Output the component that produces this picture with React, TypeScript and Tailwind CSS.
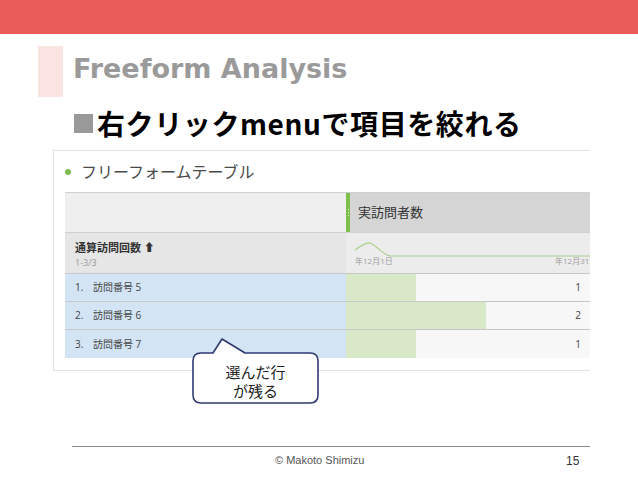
import React from "react";

const rows = [
  { n: "1.", label: "訪問番号 5", v: 1 },
  { n: "2.", label: "訪問番号 6", v: 2 },
  { n: "3.", label: "訪問番号 7", v: 1 },
];

const jp = { fontFamily: '"Open Sans", "Noto Sans CJK JP", sans-serif' };

export default function App() {
  return (
    <div className="w-[638px] h-[479px] bg-white relative overflow-hidden">
      <div className="h-[34px] bg-[#e85d58]" />
      <div className="flex items-center mt-[12px] ml-[38px]">
        <div className="w-[25px] h-[51px] bg-[#fbe3e1]" />
        <div
          className="ml-[10px] mb-[6px] text-[27px] font-bold text-[#9a9a9a] leading-none"
          style={{ fontFamily: '"DejaVu Sans", Verdana, sans-serif' }}
        >
          Freeform Analysis
        </div>
      </div>
      <div
        className="ml-[74px] mt-[12px] flex items-center text-[28px] font-bold text-black leading-none tracking-[0.6px]"
        style={{ fontFamily: '"Noto Sans CJK JP", sans-serif' }}
      >
        <span className="w-[19px] h-[19px] bg-[#999999] mr-[4px]" />
        <span>右クリックmenuで項目を絞れる</span>
      </div>

      <div className="ml-[53px] mt-[13px] w-[537px] h-[221px] border-t border-l border-b border-[#e2e2e2] overflow-hidden" style={jp}>
        <div className="h-[41px] flex items-center pl-[11px] pt-[1px]">
          <span className="w-[6px] h-[6px] rounded-full bg-[#7cbd4e]" />
          <span className="ml-[10px] text-[16px] text-[#4a4a4a] leading-none">フリーフォームテーブル</span>
        </div>
        <div className="ml-[11px] w-[526px]">
          <div className="flex h-[41px] border-t border-b border-[#d0d0d0]">
            <div className="w-[281px] bg-[#efefef]" />
            <div className="w-[4px] bg-[#7dbf4b] flex flex-col items-center justify-center gap-[2px]">
              <span className="w-[1px] h-[1px] bg-[#d8ecc8]" />
              <span className="w-[1px] h-[1px] bg-[#d8ecc8]" />
              <span className="w-[1px] h-[1px] bg-[#d8ecc8]" />
            </div>
            <div className="flex-1 bg-[#d5d5d5] flex items-center pl-[8px] text-[13px] text-[#333]">実訪問者数</div>
          </div>
          <div className="flex h-[41px] border-b border-[#c8c8c8]">
            <div className="w-[281px] bg-[#e6e6e6] pl-[10px] pt-[8px]">
              <div className="text-[11px] font-bold text-[#333] leading-[14px]">通算訪問回数 ⬆</div>
              <div className="text-[9px] text-[#999] leading-[14px] mt-[1px]">1-3/3</div>
            </div>
            <div className="flex-1 bg-[#ececec] relative overflow-hidden">
              <svg className="absolute left-0 top-0" width="245" height="40" viewBox="0 0 245 40">
                <path d="M9 17 C 16 12, 21 9, 24 10 C 30 12, 36 21, 44 23 L 245 23" fill="none" stroke="#a9d08a" strokeWidth="1.2" />
              </svg>
              <div className="absolute left-[9px] top-[24px] text-[8px] text-[#a0a0a0] leading-none">年12月1日</div>
              <div className="absolute left-[209px] top-[24px] text-[8px] text-[#a0a0a0] leading-none whitespace-nowrap">年12月31日</div>
            </div>
          </div>
          {rows.map((r, i) => (
            <div key={i} className={`flex h-[28px] ${i < 2 ? "border-b border-[#c8c8c8]" : ""}`}>
              <div className="w-[281px] bg-[#d3e4f4] flex items-center pl-[10px] text-[10px] text-[#444]">
                <span className="w-[18px]">{r.n}</span>
                <span>{r.label}</span>
              </div>
              <div className="flex-1 bg-[#f7f7f7] relative flex items-center justify-end pr-[10px] text-[10px] text-[#444]">
                <div className="absolute left-0 top-0 bottom-0 bg-[#d9e8c8]" style={{ width: `${r.v * 70}px` }} />
                <span className="relative">{r.v}</span>
              </div>
            </div>
          ))}
        </div>
      </div>

      <div className="absolute left-[192px] top-[337px] w-[130px] h-[68px]">
        <svg width="130" height="68" viewBox="0 0 130 68" className="absolute left-0 top-0">
          <path
            d="M9 16 L21 16 L30 2 L53 16 L118 16 Q126 16 126 24 L126 58 Q126 66 118 66 L9 66 Q1 66 1 58 L1 24 Q1 16 9 16 Z"
            fill="white"
            stroke="#2f3a70"
            strokeWidth="1.6"
            strokeLinejoin="round"
          />
        </svg>
        <div
          className="absolute left-0 top-[25px] w-[127px] text-center text-[15px] leading-[19px] text-[#222]"
          style={{ fontFamily: '"Noto Sans CJK JP", sans-serif' }}
        >
          <div>選んだ行</div>
          <div>が残る</div>
        </div>
      </div>

      <div className="ml-[72px] mt-[75px] w-[518px] border-t border-[#888]" />
      <div className="relative h-[20px]" style={{ fontFamily: '"Liberation Sans", Arial, sans-serif' }}>
        <div className="absolute left-[275px] top-[8px] text-[11px] text-[#555] leading-none">© Makoto Shimizu</div>
        <div className="absolute left-[566px] top-[8px] text-[12px] text-[#333] leading-none">15</div>
      </div>
    </div>
  );
}
